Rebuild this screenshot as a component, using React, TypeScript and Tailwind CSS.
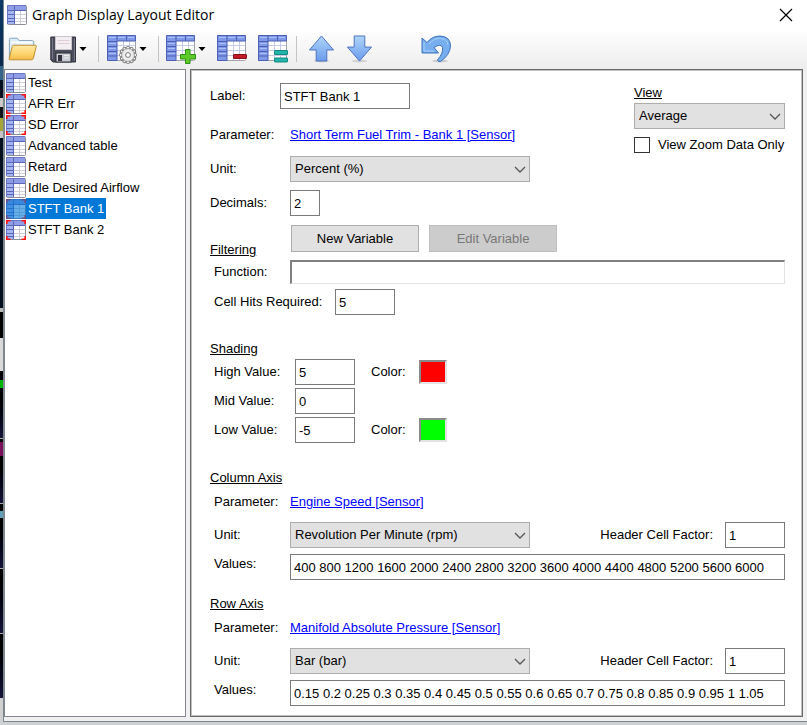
import type { ReactNode } from "react";

type Mark = "gear" | "plus" | "minus" | "equal";

type TableItem = { name: string; flagged?: boolean };

const tables: TableItem[] = [
  { name: "Test" },
  { name: "AFR Err", flagged: true },
  { name: "SD Error", flagged: true },
  { name: "Advanced table" },
  { name: "Retard" },
  { name: "Idle Desired Airflow" },
  { name: "STFT Bank 1", flagged: true },
  { name: "STFT Bank 2", flagged: true },
];

const selected = "STFT Bank 1";

// Slices of the desktop that show along the left edge of the window
const desktop = [
  "h-[66px] bg-linear-to-b from-[#0d3a68] to-[#0b2a4c]",
  "h-[14px] bg-[#35648a]",
  "h-[18px] bg-[#04101f]",
  "h-[9px] bg-[#c9c9c9]",
  "h-[11px] bg-[#101418]",
  "h-[13px] bg-[#a5a53a]",
  "h-[7px] bg-[#c4c4c4]",
  "h-[170px] bg-[#04101f]",
  "h-[4px] bg-[#b8b8b8]",
  "h-[26px] bg-black",
  "h-[33px] bg-[#d9d9d9]",
  "h-[9px] bg-black",
  "h-[8px] bg-[#00b400]",
  "h-[50px] bg-linear-to-b from-black to-[#16163c]",
  "h-[1px] bg-[#a9a9a9]",
  "h-[3px] bg-black",
  "h-[14px] bg-[#7a0f5c]",
  "h-[47px] bg-linear-to-b from-black to-[#16163c]",
  "h-[1px] bg-[#a9a9a9]",
  "h-[7px] bg-black",
  "h-[7px] bg-[#5f9fb8]",
  "h-[50px] bg-linear-to-b from-black to-[#16163c]",
  "h-[1px] bg-[#a9a9a9]",
  "h-[64px] bg-linear-to-b from-black to-[#16163c]",
  "h-[1px] bg-[#a9a9a9]",
  "h-[64px] bg-linear-to-b from-black to-[#16163c]",
  "flex-1 bg-[#d0d0d0]",
];

function SmallTable({ flagged }: { flagged?: boolean }) {
  return (
    <svg viewBox="0 0 20 20" className="size-5 shrink-0" aria-hidden="true">
      <rect x="0.5" y="0.5" width="19" height="19" rx="1" fill="#fff" stroke="#8d8d99" />
      <rect x="1" y="1" width="18" height="4" fill="#8f9ee6" />
      <rect x="1" y="5" width="6" height="14" fill="#a5b5f0" />
      <path d="M1 5.5H19M7.5 1V19" stroke="#5a66b8" />
      <path d="M1 9.5H7M1 13.5H7M1 16.5H7" stroke="#5a66b8" />
      <path d="M13.5 6V19M8 9.5H19M8 13.5H19M8 16.5H19" stroke="#cfcfd8" />
      <path d="M0.5 19V0.5H19" stroke="#6b76c4" fill="none" />
      {flagged && (
        <path
          d="M0.8 4V0.8H4.500M15.500 0.8H19.200V4M19.200 16V19.200H15.500M4.500 19.200H0.8V16"
          stroke="#ff1010"
          strokeWidth="1.6"
          fill="none"
        />
      )}
    </svg>
  );
}

function Gear() {
  const teeth = [0, 30, 60, 90, 120, 150, 180, 210, 240, 270, 300, 330];
  return (
    <g transform="translate(21 20)">
      {teeth.map((t) => (
        <rect key={t} x="-1.5" y="-8.5" width="3" height="4" rx="1" fill="#f2f2f2" stroke="#777" transform={`rotate(${t})`} />
      ))}
      <circle r="6.4" fill="#ececec" stroke="#8a8a8a" strokeWidth="0.8" />
      <circle r="2.4" fill="#fff" stroke="#777" />
    </g>
  );
}

function TableIcon({ mark }: { mark: Mark }) {
  return (
    <svg viewBox="0 0 30 29" className="h-[29px] w-[30px]" aria-hidden="true">
      <rect x="0.5" y="0.5" width="28" height="25" rx="1" fill="#fff" stroke="#a3a3ad" />
      <path d="M10 10.5H28M10 15.5H28M10 20.5H28M16.5 6V25M22.5 6V25" stroke="#c6cbe4" />
      <path d="M0.5 0.5H28.5V6H10V25.5H0.5Z" fill="#7f98e8" stroke="#4c5fb4" />
      <path d="M1 6.5H10M1 11.5H10M1 16.5H10M1 21H10M10 1V6M19.5 1V6" stroke="#4c5fb4" />
      <path d="M2 2.5H9M11 2.5H18.5M21 2.5H27M2 8.5H9M2 13.5H9M2 18.5H9" stroke="#a9bff6" />
      {mark === "gear" && <Gear />}
      {mark === "plus" && (
        <path d="M19.500 14.500H24V19.500H29.500V24H24V28.500H19.500V24H14.500V19.500H19.500Z" fill="#5ccb2a" stroke="#2f8f14" />
      )}
      {mark === "minus" && <rect x="16.500" y="19.500" width="13" height="4" rx="0.500" fill="#c01c28" stroke="#8c1019" />}
      {mark === "equal" && (
        <g fill="#22b5ac" stroke="#15877f">
          <rect x="16.500" y="15.500" width="13" height="4" rx="0.500" />
          <rect x="16.500" y="23" width="13" height="4" rx="0.500" />
        </g>
      )}
    </svg>
  );
}

function FolderIcon() {
  return (
    <svg viewBox="0 0 32 26" className="h-[26px] w-[30px]" aria-hidden="true">
      <defs>
        <linearGradient id="folder" x1="0" y1="0" x2="0" y2="1">
          <stop offset="0" stopColor="#ffeaa6" />
          <stop offset="0.6" stopColor="#fcd46c" />
          <stop offset="1" stopColor="#f3b849" />
        </linearGradient>
      </defs>
      <path d="M1.500 23V3Q1.500 1.500 3 1.500H10L12 4H26Q27.500 4 27.500 6V20H2Z" fill="#dcecf8" stroke="#7f9fb9" />
      <path d="M3 6H26" stroke="#fff" strokeWidth="2" />
      <path d="M6 9H29.500Q30.500 9 30 11L27 23Q26.700 24.500 25 24.500H2Q0.800 24.500 1.300 23L4.500 10.500Q4.800 9 6 9Z" fill="url(#folder)" stroke="#c08a2a" />
    </svg>
  );
}

function SaveIcon() {
  return (
    <svg viewBox="0 0 27 27" className="size-[27px]" aria-hidden="true">
      <path d="M1.500 1H25.500V26H3L0.800 24V1Z" fill="#4b4d5c" stroke="#30313c" />
      <path d="M2.500 2V23M24.500 2V25" stroke="#777988" />
      <rect x="5.500" y="0.500" width="16" height="13" fill="#f3eef1" stroke="#c9c6cc" />
      <path d="M7.500 4.500H19.500M7.500 7.500H19.500" stroke="#e2cdd5" />
      <rect x="6" y="17" width="15" height="9" fill="#c9ccd2" stroke="#2b2c35" />
      <rect x="8" y="19" width="4" height="6" fill="#31323d" />
      <path d="M14 19.500H19M14 22H19" stroke="#eee" />
    </svg>
  );
}

function ArrowIcon({ down }: { down?: boolean }) {
  const id = down ? "arrow-down" : "arrow-up";
  return (
    <svg viewBox="0 0 28 29" className="h-7 w-[27px]" aria-hidden="true">
      <defs>
        <linearGradient id={id} x1="0" y1="0" x2="0" y2="1">
          <stop offset="0" stopColor="#b0d5fa" />
          <stop offset="1" stopColor="#6a9bec" />
        </linearGradient>
      </defs>
      <ellipse cx="14" cy="27" rx="8" ry="1.500" fill="#000" opacity="0.120" />
      <path
        d={down ? "M8.500 1H19.500V12.500H26.500L14 27L1.500 12.500H8.500Z" : "M14 1L26.500 15.500H19.500V27H8.500V15.500H1.500Z"}
        fill={`url(#${id})`}
        stroke="#4a70bc"
        strokeLinejoin="round"
      />
    </svg>
  );
}

function UndoIcon() {
  return (
    <svg viewBox="0 0 31 28" className="h-7 w-[31px]" aria-hidden="true">
      <ellipse cx="19" cy="26" rx="8" ry="1.500" fill="#000" opacity="0.150" />
      <path
        d="M1 3L6 7.500Q11 1 19 1Q29.500 1.500 29.500 11Q29 20 19.500 26.500Q17 27 16.500 25Q22.500 18 21.500 12.500Q20 8 13 12.500L17.500 18H1Z"
        fill="#76aef0"
        stroke="#3d72b8"
        strokeLinejoin="round"
      />
      <path d="M3 7V16H13M8 9Q13 3 19.500 3.500Q26.500 4 27 10" stroke="#a9d0f8" fill="none" />
    </svg>
  );
}

function ToolButton({ label, menu, children }: { label: string; menu?: boolean; children: ReactNode }) {
  return (
    <button type="button" aria-label={label} className="flex items-center gap-[2px]">
      {children}
      {menu && (
        <svg viewBox="0 0 8 4" className="h-1 w-2" aria-hidden="true">
          <path d="M0.500 0H7.500L4 4Z" fill="#000" />
        </svg>
      )}
    </button>
  );
}

function Divider() {
  return <span className="h-[26px] w-px bg-[#c4c4c4]" />;
}

function Select({ id, value, className }: { id: string; value: string; className: string }) {
  return (
    <div className={`relative ${className}`}>
      <select
        id={id}
        defaultValue={value}
        className="h-[26px] w-full appearance-none border border-[#adadad] bg-[#e1e1e1] pl-1 pr-6"
      >
        <option>{value}</option>
      </select>
      <svg viewBox="0 0 12 7" className="pointer-events-none absolute right-1 top-[10px] h-[7px] w-3" aria-hidden="true">
        <path d="M1 1L6 6L11 1" fill="none" stroke="#555" strokeWidth="1.300" />
      </svg>
    </div>
  );
}

function TextBox({ id, value, className }: { id: string; value: string; className: string }) {
  return (
    <input id={id} type="text" defaultValue={value} className={`h-[26px] border border-[#7a7a7a] bg-white px-[3px] ${className}`} />
  );
}

function Swatch({ label, className }: { label: string; className: string }) {
  return (
    <div className="flex items-center">
      <span className="w-12">Color:</span>
      <button
        type="button"
        aria-label={label}
        className={`h-6 w-7 border-2 border-l-[#8a8a8a] border-t-[#8a8a8a] border-b-[#e3e3e3] border-r-[#e3e3e3] ${className}`}
      />
    </div>
  );
}

type AxisProps = { id: string; title: string; parameter: string; unit: string; values: string };

function Axis({ id, title, parameter, unit, values }: AxisProps) {
  return (
    <section>
      <h2 className="h-5 underline">{title}</h2>
      <div className="mt-1 flex h-5 items-center">
        <span className="w-20 pl-1">Parameter:</span>
        <a href="#" className="text-[#0000ff] underline">
          {parameter}
        </a>
      </div>
      <div className="mt-[10px] flex items-center">
        <label htmlFor={`${id}-unit`} className="w-20 pl-1">
          Unit:
        </label>
        <Select id={`${id}-unit`} value={unit} className="w-60" />
        <label htmlFor={`${id}-factor`} className="ml-auto mr-3">
          Header Cell Factor:
        </label>
        <TextBox id={`${id}-factor`} value="1" className="w-[60px]" />
      </div>
      <div className="mt-[6px] flex">
        <label htmlFor={`${id}-values`} className="w-20 shrink-0 pl-1">
          Values:
        </label>
        <TextBox id={`${id}-values`} value={values} className="min-w-0 flex-1" />
      </div>
    </section>
  );
}

export default function App() {
  return (
    <div className="flex min-h-screen bg-[#d0d0d0] font-['Liberation_Sans',Arial,sans-serif] text-[13px] leading-5 text-black">
      <div className="flex w-[3px] shrink-0 flex-col">
        {desktop.map((slice, i) => (
          <span key={i} className={slice} />
        ))}
      </div>

      <div className="mb-[3px] flex flex-1 flex-col border-b border-l border-[#7c868f] bg-[#f0f0f0]">
        <header className="flex h-[29px] items-center bg-white pl-[3px] pr-[14px]">
          <SmallTable />
          <h1 className="ml-[5px] font-['Open_Sans',sans-serif] text-[14px]">Graph Display Layout Editor</h1>
          <button type="button" aria-label="Close" className="ml-auto">
            <svg viewBox="0 0 14 14" className="size-[14px]" aria-hidden="true">
              <path d="M1 1L13 13M13 1L1 13" stroke="#000" strokeWidth="1.200" />
            </svg>
          </button>
        </header>

        <div className="flex h-10 items-center bg-linear-to-b from-white to-[#ededed] pl-1">
          <ToolButton label="Open">
            <FolderIcon />
          </ToolButton>
          <div className="ml-3 flex items-center gap-[11px]">
            <ToolButton label="Save" menu>
              <SaveIcon />
            </ToolButton>
            <Divider />
          </div>
          <div className="ml-2 flex items-center gap-[11px]">
            <ToolButton label="Table options" menu>
              <TableIcon mark="gear" />
            </ToolButton>
            <Divider />
          </div>
          <div className="ml-[7px] flex items-center gap-[11px]">
            <ToolButton label="Add table" menu>
              <TableIcon mark="plus" />
            </ToolButton>
            <ToolButton label="Remove table">
              <TableIcon mark="minus" />
            </ToolButton>
            <ToolButton label="Duplicate table">
              <TableIcon mark="equal" />
            </ToolButton>
          </div>
          <div className="ml-2 flex items-center gap-[11px]">
            <Divider />
            <ToolButton label="Move up">
              <ArrowIcon />
            </ToolButton>
            <ToolButton label="Move down">
              <ArrowIcon down />
            </ToolButton>
          </div>
          <div className="ml-12">
            <ToolButton label="Undo">
              <UndoIcon />
            </ToolButton>
          </div>
        </div>

        <main className="flex flex-1 gap-1 pb-1 pr-1">
          <ul className="w-[182px] shrink-0 border border-[#828790] bg-white pl-px pt-[2px]">
            {tables.map((t) => (
              <li key={t.name} className="flex h-[21px] items-center">
                <span className="relative">
                  <SmallTable flagged={t.flagged} />
                  {t.name === selected && <span className="absolute inset-0 bg-[#0078d7]/60" />}
                </span>
                <button type="button" className={`h-[21px] px-[2px] ${t.name === selected ? "bg-[#0078d7] text-white" : ""}`}>
                  {t.name}
                </button>
              </li>
            ))}
          </ul>

          <form className="min-w-0 flex-1 border border-[#6a6a6a] bg-white pl-[19px] pr-[17px] pt-[13px] ring-1 ring-[#c0c0c0] ring-inset">
            <div className="flex justify-between">
              <div>
                <div className="flex items-center">
                  <label htmlFor="label" className="w-[70px]">
                    Label:
                  </label>
                  <TextBox id="label" value={selected} className="w-[130px]" />
                </div>
                <div className="mt-[13px] flex h-[26px] items-center">
                  <span className="w-20">Parameter:</span>
                  <a href="#" className="text-[#0000ff] underline">
                    Short Term Fuel Trim - Bank 1 [Sensor]
                  </a>
                </div>
                <div className="mt-2 flex items-center">
                  <label htmlFor="unit" className="w-20">
                    Unit:
                  </label>
                  <Select id="unit" value="Percent (%)" className="w-60" />
                </div>
                <div className="mt-2 flex items-center">
                  <label htmlFor="decimals" className="w-20">
                    Decimals:
                  </label>
                  <TextBox id="decimals" value="2" className="w-[30px]" />
                </div>
              </div>

              <div className="w-[151px]">
                <label htmlFor="view" className="block underline">
                  View
                </label>
                <Select id="view" value="Average" className="w-full" />
                <label className="mt-[6px] flex items-center gap-2 whitespace-nowrap">
                  <input type="checkbox" className="size-4 shrink-0 appearance-none border border-[#333] bg-white" />
                  View Zoom Data Only
                </label>
              </div>
            </div>

            <section>
              <div className="mt-[9px] flex h-[35px]">
                <h2 className="w-[81px] self-end underline">Filtering</h2>
                <button type="button" className="h-[27px] w-32 border border-[#adadad] bg-[#e1e1e1]">
                  New Variable
                </button>
                <button type="button" disabled className="ml-[10px] h-[27px] w-32 border border-[#bfbfbf] bg-[#cccccc] text-[#787878]">
                  Edit Variable
                </button>
              </div>
              <div className="flex items-center">
                <label htmlFor="function" className="w-20 shrink-0 pl-1">
                  Function:
                </label>
                <input
                  id="function"
                  type="text"
                  className="h-6 min-w-0 flex-1 border-2 border-b border-r border-[#808080] border-b-[#e3e3e3] border-r-[#e3e3e3] bg-white px-[3px]"
                />
              </div>
              <div className="mt-[5px] flex items-center">
                <label htmlFor="hits" className="w-[125px] pl-1">
                  Cell Hits Required:
                </label>
                <TextBox id="hits" value="5" className="w-[60px]" />
              </div>
            </section>

            <section className="mt-6">
              <h2 className="h-5 underline">Shading</h2>
              <div className="flex items-center">
                <label htmlFor="high" className="w-[85px] pl-1">
                  High Value:
                </label>
                <TextBox id="high" value="5" className="mr-4 w-[60px]" />
                <Swatch label="High color" className="bg-[#ff0000]" />
              </div>
              <div className="mt-[3px] flex items-center">
                <label htmlFor="mid" className="w-[85px] pl-1">
                  Mid Value:
                </label>
                <TextBox id="mid" value="0" className="w-[60px]" />
              </div>
              <div className="mt-[3px] flex items-center">
                <label htmlFor="low" className="w-[85px] pl-1">
                  Low Value:
                </label>
                <TextBox id="low" value="-5" className="mr-4 w-[60px]" />
                <Swatch label="Low color" className="bg-[#00ff00]" />
              </div>
            </section>

            <div className="mt-[25px] flex flex-col gap-[14px] pb-[10px]">
              <Axis
                id="column"
                title="Column Axis"
                parameter="Engine Speed [Sensor]"
                unit="Revolution Per Minute (rpm)"
                values="400 800 1200 1600 2000 2400 2800 3200 3600 4000 4400 4800 5200 5600 6000"
              />
              <Axis
                id="row"
                title="Row Axis"
                parameter="Manifold Absolute Pressure [Sensor]"
                unit="Bar (bar)"
                values="0.15 0.2 0.25 0.3 0.35 0.4 0.45 0.5 0.55 0.6 0.65 0.7 0.75 0.8 0.85 0.9 0.95 1 1.05"
              />
            </div>
          </form>
        </main>
      </div>
    </div>
  );
}
